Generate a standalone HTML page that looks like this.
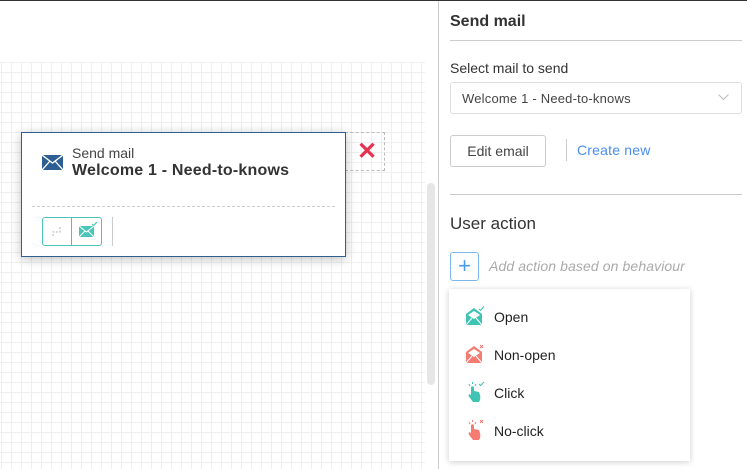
<!DOCTYPE html>
<html><head><meta charset="utf-8"><style>
*{box-sizing:border-box;margin:0;padding:0}
body{width:747px;height:469px;overflow:hidden;background:#fff;font-family:"Liberation Sans",sans-serif;position:relative;color:#333}
.top{position:absolute;left:0;top:0;width:747px;height:1px;background:#333}
.grid{position:absolute;left:0;top:62px;width:425px;height:407px;
background-image:linear-gradient(to right,#efefef 1px,transparent 1px),linear-gradient(to bottom,#efefef 1px,transparent 1px);
background-size:10px 10px;background-position:1px 0}
.scroll{position:absolute;left:427px;top:183px;width:8px;height:202px;background:#e6e6e6;border-radius:4px}
.panel{position:absolute;left:438px;top:1px;width:309px;height:468px;border-left:1px solid #ccc;background:#fff}
.node{position:absolute;left:21px;top:132px;width:325px;height:125px;background:#fff;border:1px solid #2f5f8f;box-shadow:0 2px 10px rgba(0,0,0,.25)}
.dash{position:absolute;left:345px;top:132px;width:40px;height:39px;border:1px dashed #bbb;border-left:none}
.abs{position:absolute}
</style></head><body>
<div class="top"></div>
<div class="grid"></div>
<div class="dash"></div>
<div class="abs" style="left:357px;top:140px;color:#e8304f;font-size:24px;font-weight:bold;line-height:24px">✕</div>
<div class="scroll"></div>
<div class="node">
 <svg class="abs" style="left:20px;top:22px" width="21" height="15" viewBox="0 0 21 15"><rect width="21" height="15" fill="#2d5f93"/><path d="M0 0L10.5 8L21 0M0 15L8 6M21 15L13 6" stroke="#fff" stroke-width="1.3" fill="none"/></svg>
 <div class="abs" style="left:50px;top:12px;font-size:14px;color:#444">Send mail</div>
 <div class="abs" style="left:50px;top:29px;font-size:16px;font-weight:600;color:#333;letter-spacing:0.2px">Welcome 1 - Need-to-knows</div>
 <div class="abs" style="left:10px;top:73px;width:303px;border-top:1px dashed #ccc"></div>
 <div class="abs" style="left:20px;top:84px;width:60px;height:29px;border:1px solid #4ac6b8;border-radius:3px"></div>
 <div class="abs" style="left:49px;top:84px;width:1px;height:29px;background:#4ac6b8"></div>
 <svg class="abs" style="left:29px;top:91px" width="12" height="14"><path d="M2 12V8H9V3" stroke="#ccc" stroke-width="1.5" fill="none" stroke-dasharray="2 1.5"/></svg>
 <svg class="abs" style="left:56px;top:88px" width="20" height="18"><rect x="1" y="5" width="15" height="11" fill="#4ac6b8"/><path d="M1 5L8.5 11L16 5M1 16L7 10M16 16L10 10" stroke="#fff" stroke-width="1" fill="none"/><path d="M14 3l1.5 1.5L19 1" stroke="#4ac6b8" stroke-width="1.2" fill="none"/></svg>
 <div class="abs" style="left:90px;top:84px;width:1px;height:29px;background:#ccc"></div>
</div>
<div class="panel">
 <div class="abs" style="left:11px;top:12px;font-size:16px;font-weight:600;color:#333">Send mail</div>
 <div class="abs" style="left:11px;top:39px;width:292px;height:1px;background:#ccc"></div>
 <div class="abs" style="left:11px;top:59px;font-size:14px;color:#333">Select mail to send</div>
 <div class="abs" style="left:11px;top:81px;width:292px;height:32px;border:1px solid #ddd;border-radius:3px"></div>
 <div class="abs" style="left:23px;top:90px;font-size:13px;color:#444;letter-spacing:0.2px">Welcome 1 - Need-to-knows</div>
 <svg class="abs" style="left:279px;top:93px" width="11" height="7"><path d="M0.5 0.5L5.5 5.5L10.5 0.5" stroke="#bbb" fill="none"/></svg>
 <div class="abs" style="left:11px;top:134px;width:96px;height:32px;border:1px solid #ccc;border-radius:3px;font-size:14px;color:#444;text-align:center;line-height:30px">Edit email</div>
 <div class="abs" style="left:127px;top:138px;width:1px;height:22px;background:#ccc"></div>
 <div class="abs" style="left:138px;top:141px;font-size:14px;color:#4a8ef0;letter-spacing:0.2px">Create new</div>
 <div class="abs" style="left:11px;top:193px;width:292px;height:1px;background:#ccc"></div>
 <div class="abs" style="left:11px;top:213px;font-size:17px;color:#333">User action</div>
 <div class="abs" style="left:11px;top:251px;width:29px;height:29px;border:1px solid #7ab8ee;border-radius:3px;color:#4a9be8;font-size:22px;text-align:center;line-height:26px">+</div>
 <div class="abs" style="left:50px;top:257px;font-size:14px;font-style:italic;color:#aaa;letter-spacing:0.1px">Add action based on behaviour</div>
 <div class="abs" style="left:10px;top:288px;width:241px;height:172px;background:#fff;box-shadow:0 1px 6px rgba(0,0,0,.2)">
  <svg class="abs" style="left:16px;top:17px" width="20" height="20"><path d="M1 8L9 2L17 8V19H1Z" fill="#3fc4b3"/><path d="M3 9L9 5L15 9L9 13Z" fill="#fff"/><path d="M1 19L7 12M17 19L11 12" stroke="#fff" fill="none"/><path d="M14 3l1.5 1.5L19 0.5" stroke="#3fc4b3" fill="none"/></svg>
  <div class="abs" style="left:45px;top:20px;font-size:14px;color:#222">Open</div>
  <svg class="abs" style="left:16px;top:55px" width="20" height="20"><path d="M1 8L9 2L17 8V19H1Z" fill="#f57b73"/><path d="M3 9L9 5L15 9L9 13Z" fill="#fff"/><path d="M1 19L7 12M17 19L11 12" stroke="#fff" fill="none"/><path d="M15 1l3 3M18 1l-3 3" stroke="#f57b73" fill="none"/></svg>
  <div class="abs" style="left:45px;top:58px;font-size:14px;color:#222">Non-open</div>
  <svg class="abs" style="left:16px;top:92px" width="20" height="22"><path d="M6 6V14L4 13Q3 15 5 17L8 21H14Q16 18 15 14L14 11L9 10V6Q7.5 4.5 6 6Z" fill="#3fc4b3"/><path d="M4 3L5 5M7.5 1V3M11 3L10 5" stroke="#3fc4b3" fill="none"/><path d="M14 3l1.5 1.5L19 1" stroke="#3fc4b3" fill="none"/></svg>
  <div class="abs" style="left:45px;top:96px;font-size:14px;color:#222">Click</div>
  <svg class="abs" style="left:16px;top:130px" width="20" height="22"><path d="M6 6V14L4 13Q3 15 5 17L8 21H14Q16 18 15 14L14 11L9 10V6Q7.5 4.5 6 6Z" fill="#f57b73"/><path d="M4 3L5 5M7.5 1V3M11 3L10 5" stroke="#f57b73" fill="none"/><path d="M15 1l3 3M18 1l-3 3" stroke="#f57b73" fill="none"/></svg>
  <div class="abs" style="left:45px;top:134px;font-size:14px;color:#222">No-click</div>
 </div>
</div>
</body></html>
